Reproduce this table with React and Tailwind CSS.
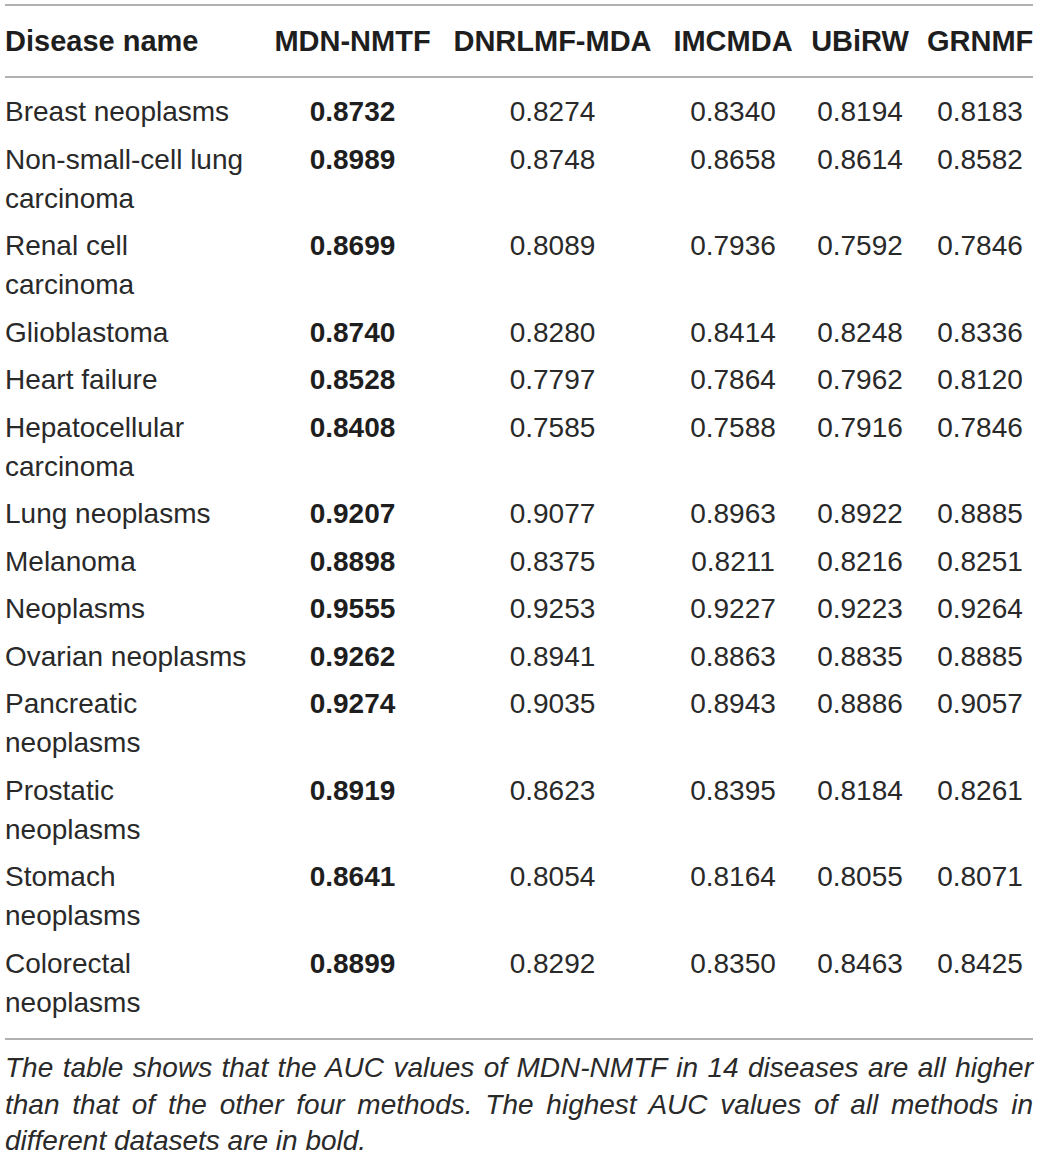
const cols = ["MDN-NMTF", "DNRLMF-MDA", "IMCMDA", "UBiRW", "GRNMF"];

const rows = [
  [["Breast neoplasms"], "0.8732", "0.8274", "0.8340", "0.8194", "0.8183"],
  [["Non-small-cell lung", "carcinoma"], "0.8989", "0.8748", "0.8658", "0.8614", "0.8582"],
  [["Renal cell", "carcinoma"], "0.8699", "0.8089", "0.7936", "0.7592", "0.7846"],
  [["Glioblastoma"], "0.8740", "0.8280", "0.8414", "0.8248", "0.8336"],
  [["Heart failure"], "0.8528", "0.7797", "0.7864", "0.7962", "0.8120"],
  [["Hepatocellular", "carcinoma"], "0.8408", "0.7585", "0.7588", "0.7916", "0.7846"],
  [["Lung neoplasms"], "0.9207", "0.9077", "0.8963", "0.8922", "0.8885"],
  [["Melanoma"], "0.8898", "0.8375", "0.8211", "0.8216", "0.8251"],
  [["Neoplasms"], "0.9555", "0.9253", "0.9227", "0.9223", "0.9264"],
  [["Ovarian neoplasms"], "0.9262", "0.8941", "0.8863", "0.8835", "0.8885"],
  [["Pancreatic", "neoplasms"], "0.9274", "0.9035", "0.8943", "0.8886", "0.9057"],
  [["Prostatic", "neoplasms"], "0.8919", "0.8623", "0.8395", "0.8184", "0.8261"],
  [["Stomach", "neoplasms"], "0.8641", "0.8054", "0.8164", "0.8055", "0.8071"],
  [["Colorectal", "neoplasms"], "0.8899", "0.8292", "0.8350", "0.8463", "0.8425"],
];

const grid =
  "grid grid-cols-[258px_179px_221px_140px_114px_116px] items-start";

export default function App() {
  return (
    <div className="bg-white w-[1040px] h-[1157px] font-['Liberation_Sans',Arial,sans-serif] text-[#292929]">
      <div className="ml-[5px] w-[1028px] pt-[4px]">
        {/* header */}
        <div
          className={`${grid} border-t-2 border-b-2 border-[#b0b0b0] py-[15.5px] text-[29px] leading-[39px] font-bold text-[#1e1e1e]`}
        >
          <div className="whitespace-nowrap">Disease name</div>
          {cols.map((c, i) => (
            <div
              key={c}
              className={
                i === 4
                  ? "text-center pl-[10px] whitespace-nowrap"
                  : "text-center whitespace-nowrap"
              }
            >
              {c}
            </div>
          ))}
        </div>

        {/* body */}
        <div className="pt-[10px] pb-[12px] border-b-2 border-[#b0b0b0] text-[28px] leading-[39px]">
          {rows.map((r) => (
            <div key={r[0].join(" ")} className={`${grid} py-[4.25px]`}>
              <div className="whitespace-nowrap">
                {r[0].map((l) => (
                  <div key={l}>{l}</div>
                ))}
              </div>
              <div className="text-center font-bold text-[#1e1e1e]">{r[1]}</div>
              <div className="text-center">{r[2]}</div>
              <div className="text-center">{r[3]}</div>
              <div className="text-center">{r[4]}</div>
              <div className="text-center pl-[10px]">{r[5]}</div>
            </div>
          ))}
        </div>

        {/* caption */}
        <div className="mt-[10px] text-[28px] leading-[36.5px] italic text-[#2a2a2a]">
          <div className="text-justify [text-align-last:justify]">
            The table shows that the AUC values of MDN-NMTF in 14 diseases are all higher
          </div>
          <div className="text-justify [text-align-last:justify]">
            than that of the other four methods. The highest AUC values of all methods in
          </div>
          <div>different datasets are in bold.</div>
        </div>
      </div>
    </div>
  );
}
